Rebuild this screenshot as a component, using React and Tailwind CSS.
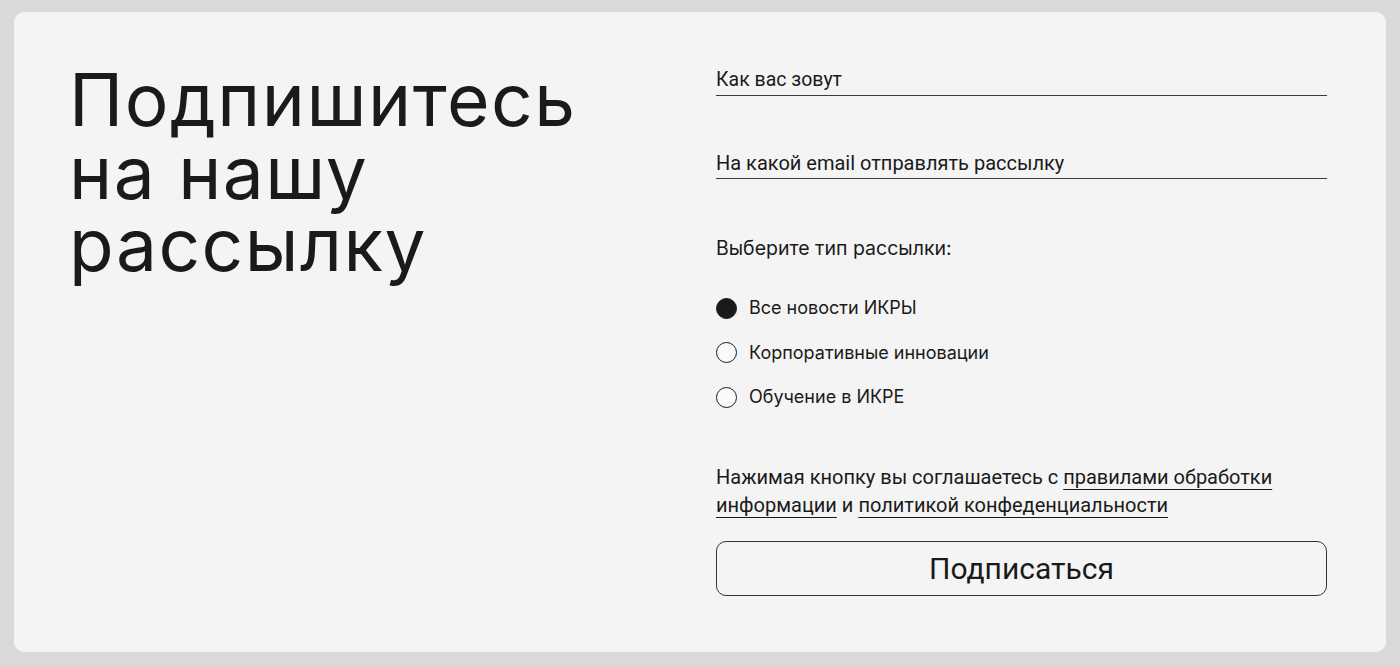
import React, { useState } from 'react';

const options = ['Все новости ИКРЫ', 'Корпоративные инновации', 'Обучение в ИКРЕ'];

export default function App() {
  const [selected, setSelected] = useState(0);

  return (
    <div className="min-h-screen bg-[#d9d9d9] px-[14px] pt-[12px] pb-[15px]">
      <div className="flex h-[640px] rounded-[10px] bg-[#f4f4f4] pl-[58px] pt-[50px]">
        {/* Heading */}
        <div className="w-[644px] shrink-0 pt-[2px]">
          <h1 className="-ml-[3px] font-['Inter',sans-serif] text-[73px] leading-[72.5px] tracking-[1.5px] text-[#1a1a1a]">
            Подпишитесь
            <br />
            на нашу
            <br />
            рассылку
          </h1>
        </div>

        {/* Form */}
        <div className="flex w-[611px] flex-col pt-[6px] font-['Roboto',sans-serif] text-[#1a1a1a]">
          <label className="block border-b border-[#3a3a3a] pb-[3px] text-[19.5px] leading-[24px]">
            Как вас зовут
          </label>
          <label className="mt-[55px] block border-b border-[#3a3a3a] pb-[3px] text-[20px] leading-[24px]">
            На какой email отправлять рассылку
          </label>

          <p className="mt-[57px] font-['Inter',sans-serif] text-[19.5px] leading-[24px]">Выберите тип рассылки:</p>

          <div className="mt-[37px] flex flex-col gap-[22.5px]">
            {options.map((opt, idx) => (
              <button
                key={opt}
                onClick={() => setSelected(idx)}
                className="flex items-center gap-[12px] text-left"
              >
                <span
                  className={`h-[21px] w-[21px] rounded-full border-[1.5px] border-[#1a1a1a] ${
                    selected === idx ? 'bg-[#1a1a1a]' : 'bg-[#fafafa]'
                  }`}
                ></span>
                <span className="font-['Inter',sans-serif] text-[18px] leading-[22px]">{opt}</span>
              </button>
            ))}
          </div>

          <p className="mt-[55px] text-[20px] leading-[28px]">
            Нажимая кнопку вы соглашаетесь с{' '}
            <a className="underline decoration-1 underline-offset-[5px]">правилами обработки информации</a> и{' '}
            <a className="underline decoration-1 underline-offset-[5px]">политикой конфеденциальности</a>
          </p>

          <button className="mt-[22px] h-[55px] w-full rounded-[10px] border border-[#333] text-[30px] text-[#1a1a1a]">
            Подписаться
          </button>
        </div>
      </div>
    </div>
  );
}
